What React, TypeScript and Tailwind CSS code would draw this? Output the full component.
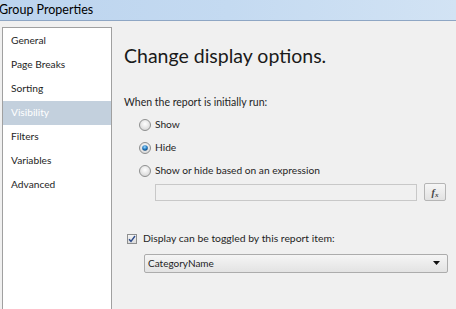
import React from "react";

const items = ["General", "Page Breaks", "Sorting", "Visibility", "Filters", "Variables", "Advanced"];

function Radio({ checked }: { checked?: boolean }) {
  return (
    <svg width="12" height="12" viewBox="0 0 12 12" className="shrink-0">
      <defs>
        <radialGradient id={checked ? "rc" : "ru"} cx="50%" cy="40%" r="60%">
          <stop offset="0%" stopColor="#ffffff" />
          <stop offset="100%" stopColor="#d6d6d6" />
        </radialGradient>
        <radialGradient id="dot" cx="45%" cy="35%" r="65%">
          <stop offset="0%" stopColor="#9fdcff" />
          <stop offset="60%" stopColor="#1f78c1" />
          <stop offset="100%" stopColor="#0d3f6e" />
        </radialGradient>
      </defs>
      <circle cx="6" cy="6" r="5.5" fill={checked ? "url(#rc)" : "url(#ru)"} stroke="#8e8f8f" strokeWidth="1" />
      {checked && <circle cx="6" cy="6" r="2.8" fill="url(#dot)" />}
    </svg>
  );
}

export default function App() {
  const font = { fontFamily: 'Lato, "Noto Sans", sans-serif' };
  return (
    <div className="w-[456px] h-[309px] overflow-hidden bg-[#f0f0f0] flex flex-col text-[#1e1e1e]" style={font}>
      <div className="h-[21px] shrink-0 bg-gradient-to-r from-[#bcd4ee] via-[#c4daf1] to-[#d2e3f4] flex items-center border-b border-[#8ea6c4]">
        <span className="text-[12.5px] leading-none text-black -ml-[1px] mt-[1px]">Group Properties</span>
      </div>
      <div className="flex flex-1 min-h-0">
        <div className="ml-[2px] mt-[6px] w-[110px] h-[300px] shrink-0 bg-white border border-[#a0a0a0] pt-[1px]">
          {items.map((it) => (
            <div
              key={it}
              className={`h-[24px] flex items-center pl-[8px] text-[10.2px] ${it === "Visibility" ? "bg-[#c3d0dd] text-white" : ""}`}
            >
              {it}
            </div>
          ))}
        </div>
        <div className="flex-1 pl-[12px] pt-[22px] flex flex-col">
          <div className="text-[19.5px] leading-[26px] text-[#1a1a1a]">Change display options.</div>
          <div className="mt-[25px] text-[10.5px] leading-[16px]">When the report is initially run:</div>
          <div className="pl-[15px] mt-[3px] flex flex-col">
            <div className="flex items-center gap-[4px] h-[23px]">
              <Radio />
              <span className="text-[10.2px]">Show</span>
            </div>
            <div className="flex items-center gap-[4px] h-[23px]">
              <Radio checked />
              <span className="text-[10.2px]">Hide</span>
            </div>
            <div className="flex items-center gap-[4px] h-[23px]">
              <Radio />
              <span className="text-[10.2px]">Show or hide based on an expression</span>
            </div>
            <div className="flex items-center ml-[16px] mt-[1px] gap-[7px]">
              <div className="w-[262px] h-[17px] border border-[#c8c8c8] bg-[#f0f0f0]" />
              <div className="w-[22px] h-[18px] border border-[#b5b5b5] rounded-[2px] bg-gradient-to-b from-[#f6f6f6] to-[#e2e2e2] flex items-center justify-center">
                <span className="text-[10px] italic font-bold text-[#444]" style={{ fontFamily: '"Liberation Serif", serif' }}>
                  f<sub className="text-[7px]">x</sub>
                </span>
              </div>
            </div>
          </div>
          <div className="flex items-center gap-[6px] mt-[30px] ml-[3px]">
            <div className="w-[10px] h-[10px] border border-[#8e8f8f] bg-gradient-to-b from-[#f4f4f4] to-[#dcdcdc] flex items-center justify-center">
              <svg width="8" height="8" viewBox="0 0 8 8">
                <path d="M1 4.2 L3 6.3 L7 1" fill="none" stroke="#2c4a8a" strokeWidth="1.4" />
              </svg>
            </div>
            <span className="text-[10.4px]">Display can be toggled by this report item:</span>
          </div>
          <div className="ml-[20px] mt-[7px] w-[304px] h-[19px] border border-[#acacac] rounded-[2px] bg-gradient-to-b from-[#f5f5f5] to-[#e3e3e3] flex items-center justify-between px-[3px]">
            <span className="text-[10px] leading-none">CategoryName</span>
            <svg width="8" height="5" viewBox="0 0 8 5" className="mr-[3px]">
              <path d="M0 0 H7 L3.5 4 Z" fill="#111" />
            </svg>
          </div>
        </div>
      </div>
    </div>
  );
}
